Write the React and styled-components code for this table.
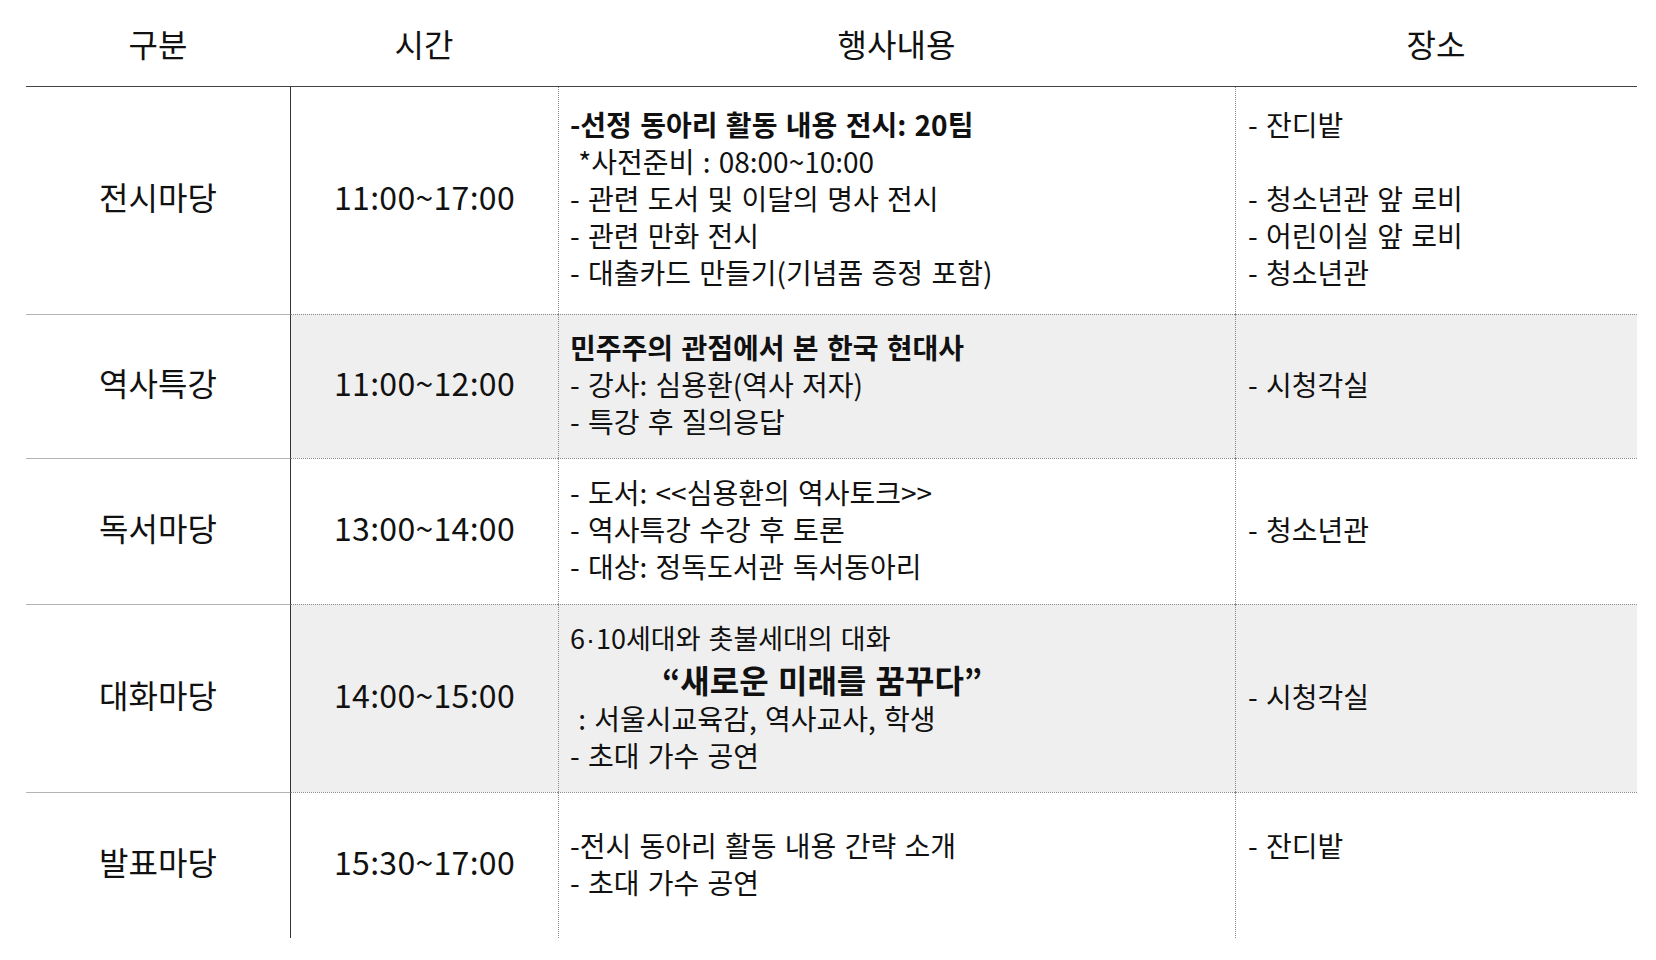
import styled, { createGlobalStyle } from "styled-components";

const GlobalStyle = createGlobalStyle`
  body {
    margin: 0;
    background: #ffffff;
    font-family: "Noto Sans CJK KR", "Noto Sans", sans-serif;
    color: #111;
  }
`;

const rows = [
  {
    name: "전시마당",
    time: "11:00~17:00",
    height: 227,
    shaded: false,
    content: [
      { text: "-선정 동아리 활동 내용 전시: 20팀", bold: true },
      { text: " *사전준비 : 08:00~10:00" },
      { text: "- 관련 도서 및 이달의 명사 전시" },
      { text: "- 관련 만화 전시" },
      { text: "- 대출카드 만들기(기념품 증정 포함)" },
    ],
    place: ["- 잔디밭", "", "- 청소년관 앞 로비", "- 어린이실 앞 로비", "- 청소년관"],
  },
  {
    name: "역사특강",
    time: "11:00~12:00",
    height: 144,
    shaded: true,
    content: [
      { text: "민주주의 관점에서 본 한국 현대사", bold: true },
      { text: "- 강사: 심용환(역사 저자)" },
      { text: "- 특강 후 질의응답" },
    ],
    place: ["- 시청각실"],
  },
  {
    name: "독서마당",
    time: "13:00~14:00",
    height: 146,
    shaded: false,
    content: [
      { text: "- 도서: <<심용환의 역사토크>>" },
      { text: "- 역사특강 수강 후 토론" },
      { text: "- 대상: 정독도서관 독서동아리" },
    ],
    place: ["- 청소년관"],
  },
  {
    name: "대화마당",
    time: "14:00~15:00",
    height: 188,
    shaded: true,
    content: [
      { text: "6·10세대와 촛불세대의 대화", small: true },
      { text: "“새로운 미래를 꿈꾸다”", bold: true, big: true },
      { text: " : 서울시교육감, 역사교사, 학생" },
      { text: "- 초대 가수 공연" },
    ],
    place: ["- 시청각실"],
  },
  {
    name: "발표마당",
    time: "15:30~17:00",
    height: 146,
    shaded: false,
    content: [
      { text: "-전시 동아리 활동 내용 간략 소개" },
      { text: "- 초대 가수 공연" },
    ],
    place: ["- 잔디밭", ""],
  },
];

const Table = styled.div`
  display: grid;
  grid-template-columns: 264px 268px 677px 402px;
  margin-left: 26px;
  width: 1611px;
`;

const HeadCell = styled.div`
  box-sizing: border-box;
  height: 87px;
  border-bottom: 1px solid #444;
  display: flex;
  align-items: center;
  justify-content: center;
  font-size: 32px;
  color: #111;
`;

const Cell = styled.div`
  box-sizing: border-box;
  height: ${(p) => p.$h}px;
  display: flex;
  flex-direction: column;
  justify-content: center;
  padding-bottom: 4px;
  background: ${(p) => (p.$shaded ? "#efefef" : "#ffffff")};
  border-top: ${(p) =>
    p.$first ? "none" : p.$label ? "1px solid #b4b4b4" : "1px dotted #8a8a8a"};
  border-left: ${(p) =>
    p.$divider === "solid"
      ? "1px solid #333"
      : p.$divider === "dotted"
      ? "1px dotted #8a8a8a"
      : "none"};
`;

const Label = styled(Cell)`
  align-items: center;
  font-size: 32px;
  padding-bottom: 10px;
`;

const Time = styled(Cell)`
  align-items: center;
  font-size: 32px;
  letter-spacing: 0.3px;
  padding-bottom: 10px;
`;

const Content = styled(Cell)`
  padding-left: 11px;
`;

const Place = styled(Cell)`
  padding-left: 12px;
`;

const Line = styled.div`
  white-space: pre;
  font-size: ${(p) => (p.$big ? 32 : p.$small ? 27 : 28)}px;
  font-weight: ${(p) => (p.$bold ? 700 : 400)};
  line-height: ${(p) => (p.$big ? 41 : 37)}px;
  padding-left: ${(p) => (p.$big ? 92 : 0)}px;
  word-spacing: 2px;
  min-height: 37px;
`;

const Dot = styled.span`
  font-family: "Liberation Sans", sans-serif;
  margin: 0 1px;
`;

function withDots(text) {
  const parts = text.split("·");
  return parts.flatMap((p, i) => (i === 0 ? [p] : [<Dot key={i}>·</Dot>, p]));
}

export default function App() {
  return (
    <>
      <GlobalStyle />
      <Table>
        <HeadCell>구분</HeadCell>
        <HeadCell>시간</HeadCell>
        <HeadCell>행사내용</HeadCell>
        <HeadCell>장소</HeadCell>
        {rows.map((r, i) => (
          <Row key={r.name} row={r} first={i === 0} />
        ))}
      </Table>
    </>
  );
}

function Row({ row, first }) {
  return (
    <>
      <Label $h={row.height} $first={first} $label>
        {row.name}
      </Label>
      <Time $h={row.height} $first={first} $shaded={row.shaded} $divider="solid">
        {row.time}
      </Time>
      <Content $h={row.height} $first={first} $shaded={row.shaded} $divider="dotted">
        {row.content.map((l, k) => (
          <Line key={k} $bold={l.bold} $big={l.big} $small={l.small}>
            {withDots(l.text)}
          </Line>
        ))}
      </Content>
      <Place $h={row.height} $first={first} $shaded={row.shaded} $divider="dotted">
        {row.place.map((p, k) => (
          <Line key={k}>{p}</Line>
        ))}
      </Place>
    </>
  );
}
